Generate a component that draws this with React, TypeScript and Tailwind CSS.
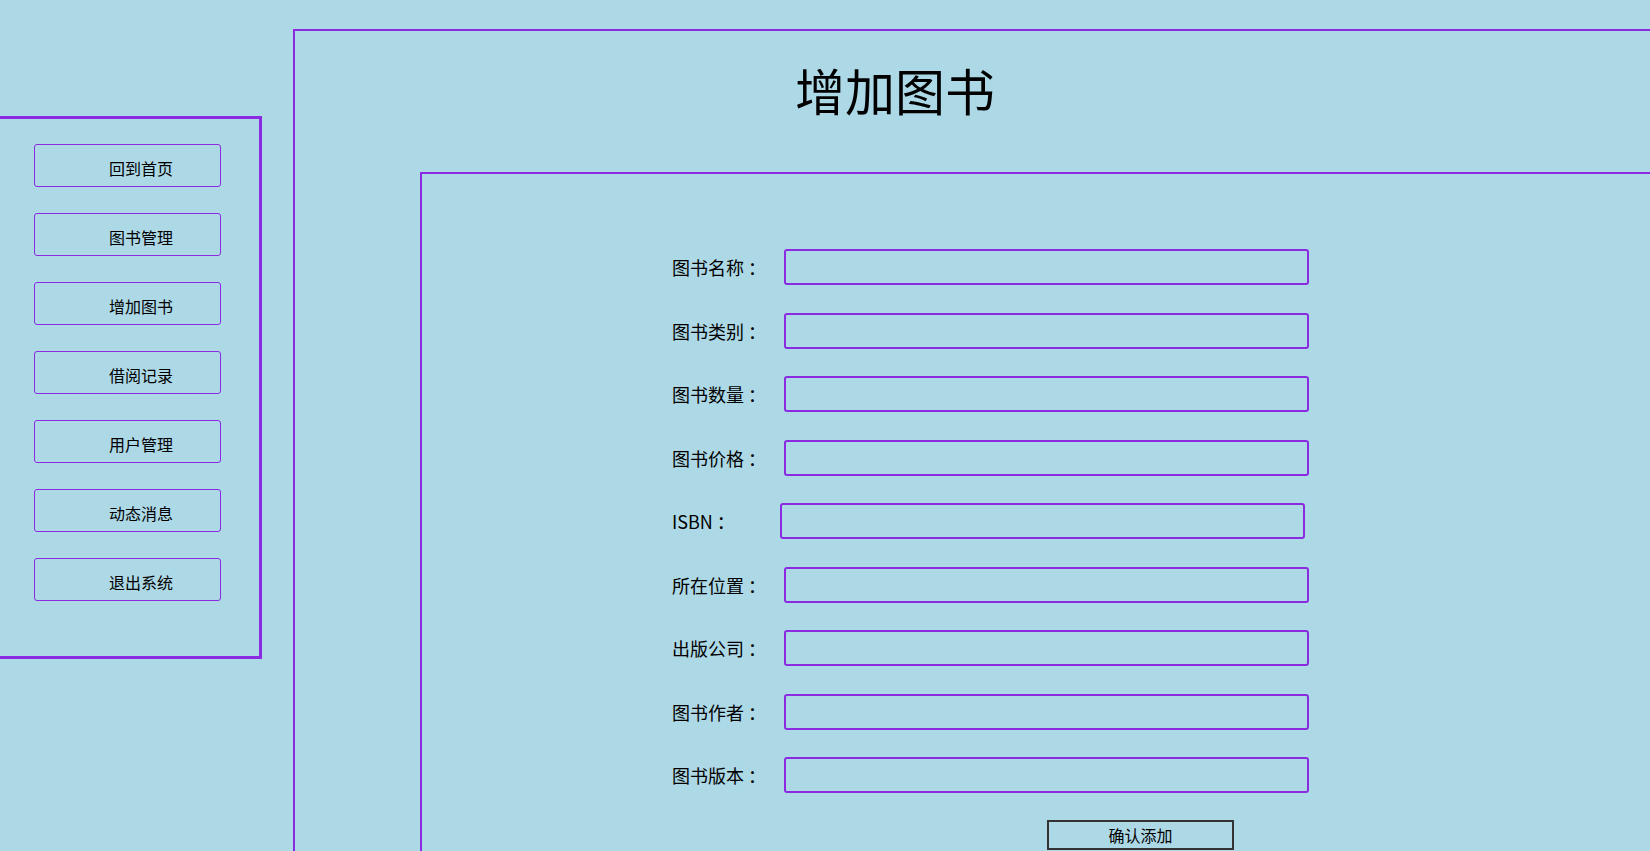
import React from "react";

const navItems = ["回到首页", "图书管理", "增加图书", "借阅记录", "用户管理", "动态消息", "退出系统"];

const fields = [
  { label: "图书名称", w: "w-[112px]" },
  { label: "图书类别", w: "w-[112px]" },
  { label: "图书数量", w: "w-[112px]" },
  { label: "图书价格", w: "w-[112px]" },
  { label: "ISBN", w: "w-[108px]" },
  { label: "所在位置", w: "w-[112px]" },
  { label: "出版公司", w: "w-[112px]" },
  { label: "图书作者", w: "w-[112px]" },
  { label: "图书版本", w: "w-[112px]" },
];

export default function App() {
  return (
    <div className="w-[1650px] h-[851px] overflow-hidden bg-[#ADD8E6] flex items-start text-black font-['Noto_Sans_CJK_SC',sans-serif]">
      {/* Sidebar */}
      <div className="shrink-0 mt-[116px] ml-[-10px] w-[272px] h-[543px] border-[3px] border-[#8A2BE2] pt-[25px] pl-[41px] flex flex-col gap-[26px]">
        {navItems.map((item) => (
          <div
            key={item}
            className="w-[187px] h-[43px] border border-[#8A2BE2] rounded-[3px] flex items-center pl-[74px] pt-[5px] text-[16px] leading-none cursor-pointer"
          >
            {item}
          </div>
        ))}
      </div>

      {/* Main */}
      <div className="shrink-0 ml-[31px] mt-[29px] w-[1420px] h-[900px] border-2 border-[#8A2BE2]">
        <h1 className="pl-[500px] pt-[33px] text-[50px] leading-[50px] font-normal">增加图书</h1>
        <div className="ml-[125px] mt-[58px] w-[1300px] h-[800px] border-2 border-[#8A2BE2] pt-[75px] pl-[250px]">
          <div className="flex flex-col gap-[27.5px]">
            {fields.map((f) => (
              <div key={f.label} className="flex items-center">
                <label className={`${f.w} text-[18px] leading-none`}>
                  {f.label}
                  <span className="ml-[4px]">：</span>
                </label>
                <input className="w-[525px] h-[36px] border-2 border-[#8A2BE2] rounded-[3px] bg-transparent outline-none" />
              </div>
            ))}
          </div>
          <button className="mt-[27px] ml-[375px] w-[187px] h-[30px] border-2 border-[#333] bg-transparent text-[16px] leading-none flex items-center justify-center">
            确认添加
          </button>
        </div>
      </div>
    </div>
  );
}
